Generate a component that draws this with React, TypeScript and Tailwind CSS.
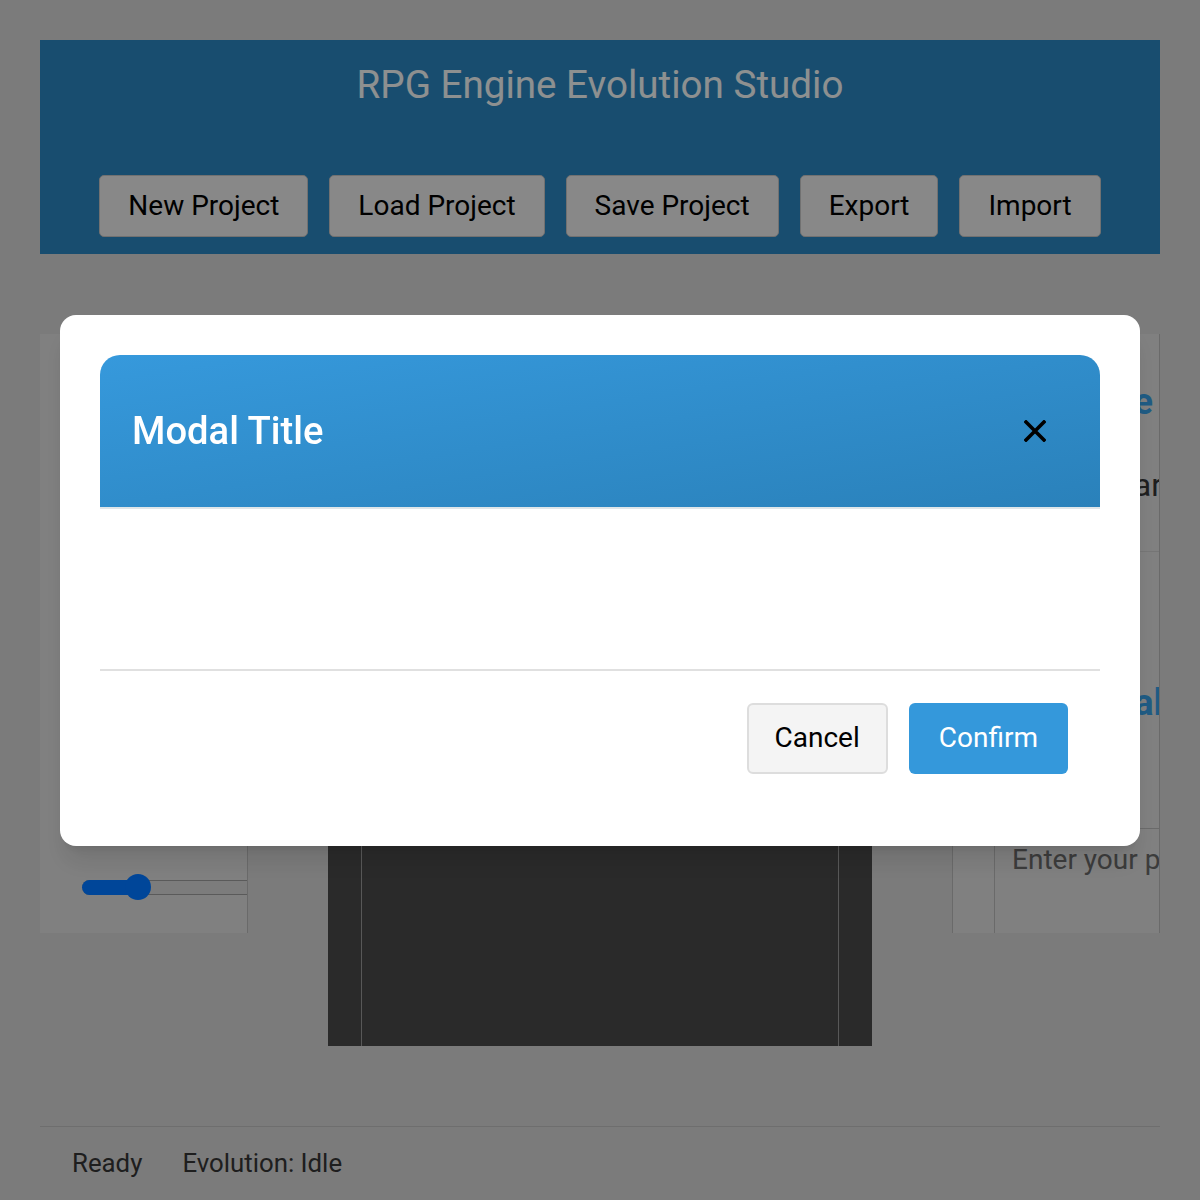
import { useState } from 'react';

const toolbarButtons = ['New Project', 'Load Project', 'Save Project', 'Export', 'Import'];

const CloseIcon = () => (
  <svg width="22" height="22" viewBox="0 0 22 22" fill="none">
    <path d="M2 2L20 20M20 2L2 20" stroke="#000" strokeWidth="3.6" strokeLinecap="square" />
  </svg>
);

const Slider = ({ value }: { value: number }) => {
  // value 0..100 over a 220px track
  const pos = 12 + (value / 100) * 196;
  return (
    <div className="relative w-[220px] h-[28px] shrink-0">
      <div className="absolute left-0 right-0 top-[7px] h-[15px] rounded-full bg-[#cfcfcf] border-y border-[#969696]" />
      <div className="absolute left-0 top-[7px] h-[15px] rounded-full bg-[#0075ff]" style={{ width: pos }} />
      <div
        className="absolute top-[1px] w-[26px] h-[26px] rounded-full bg-[#0075ff]"
        style={{ left: pos - 13 }}
      />
    </div>
  );
};

const App = () => {
  const [open, setOpen] = useState(true);
  const [speed] = useState(22.5);

  return (
    <div className="min-h-screen bg-[#cdcdcd] px-[40px] pt-[40px] pb-[40px] font-['Roboto',sans-serif]">
      <header className="bg-[#2980b9] h-[214px] pt-[21px] flex flex-col items-center">
        <h1 className="text-[#ecf0f1] text-[38.6px] leading-[48px] font-normal">RPG Engine Evolution Studio</h1>
        <div className="mt-[66px] flex justify-center gap-[21px]">
          {toolbarButtons.map((label) => (
            <button
              key={label}
              className="h-[62px] px-[28px] rounded-[5px] bg-[#e3e3e3] border border-[#bcbcbc] text-black text-[28px] leading-[34px]"
            >
              {label}
            </button>
          ))}
        </div>
      </header>

      <main className="mt-[80px] flex items-start">
        <aside className="w-[208px] h-[599px] shrink-0 bg-[#d5d5d5] border-r border-[#b1b1b1] overflow-hidden flex flex-col justify-end pl-[42px] pb-[32px]">
          <h2 className="text-[#3498db] text-[34px] font-bold mb-[20px]">Controls</h2>
          <label className="text-[#333] text-[28px] mb-[60px]">Speed</label>
          <Slider value={speed} />
        </aside>

        <section className="flex-1 flex justify-center">
          <div className="w-[544px] h-[712px] bg-[#464646] overflow-hidden pl-[33px]">
            <div className="w-[478px] h-[760px] border-x border-[#939393]" />
          </div>
        </section>

        <aside className="w-[208px] h-[599px] shrink-0 bg-[#d5d5d5] border-x border-[#b1b1b1] overflow-hidden">
          <div className="h-[218px] border-b border-[#c4c4c4] pt-[44px]">
            <h2 className="w-[206px] pr-[6px] text-right whitespace-nowrap text-[#3498db] text-[36px] leading-[48px] font-bold">
              Game State
            </h2>
            <p className="mt-[39px] w-[209px] text-right whitespace-nowrap text-[#333] text-[32px] leading-[40px]">
              Era: Stellar
            </p>
          </div>
          <div className="h-[276px] pt-[127px]">
            <h2 className="w-[210px] text-right whitespace-nowrap text-[#3498db] text-[36px] leading-[48px] font-bold">
              Journal
            </h2>
          </div>
          <textarea
            className="ml-[41px] w-[420px] h-[160px] resize-none bg-[#d5d5d5] border-l border-t border-[#b1b1b1] pl-[17px] pt-[12px] text-[28px] leading-[38px] text-[#333] placeholder:text-[#646464] outline-none"
            placeholder="Enter your prompt..."
          />
        </aside>
      </main>

      <footer className="mt-[80px] border-t border-[#b8b8b8] pt-[17px] px-[32px] flex gap-[40px] text-[#333] text-[25.8px] leading-[38px]">
        <span>Ready</span>
        <span>Evolution: Idle</span>
      </footer>

      {open && (
        <div className="fixed inset-0 bg-black/40 flex items-center justify-center">
          <div className="w-[1080px] mb-[40px] bg-white rounded-[16px] p-[40px] shadow-xl">
            <div className="h-[154px] rounded-t-[20px] bg-linear-to-br from-[#3699dc] to-[#2a81ba] border-b-2 border-[#dfe6e9] flex items-center justify-between pl-[32px] pr-[54px]">
              <h2 className="text-white text-[38.2px] font-medium leading-[44px]">Modal Title</h2>
              <button onClick={() => setOpen(false)} className="flex items-center justify-center">
                <CloseIcon />
              </button>
            </div>
            <div className="h-[160px]" />
            <div className="border-t-2 border-[#e0e0e0] p-[32px] flex justify-end gap-[21px]">
              <button
                onClick={() => setOpen(false)}
                className="h-[71px] px-[26px] rounded-[6px] bg-[#f4f4f4] border-2 border-[#dddddd] text-black text-[28px]"
              >
                Cancel
              </button>
              <button
                onClick={() => setOpen(false)}
                className="h-[71px] px-[30px] rounded-[6px] bg-[#3498db] text-white text-[28px]"
              >
                Confirm
              </button>
            </div>
          </div>
        </div>
      )}
    </div>
  );
};

export default App;
